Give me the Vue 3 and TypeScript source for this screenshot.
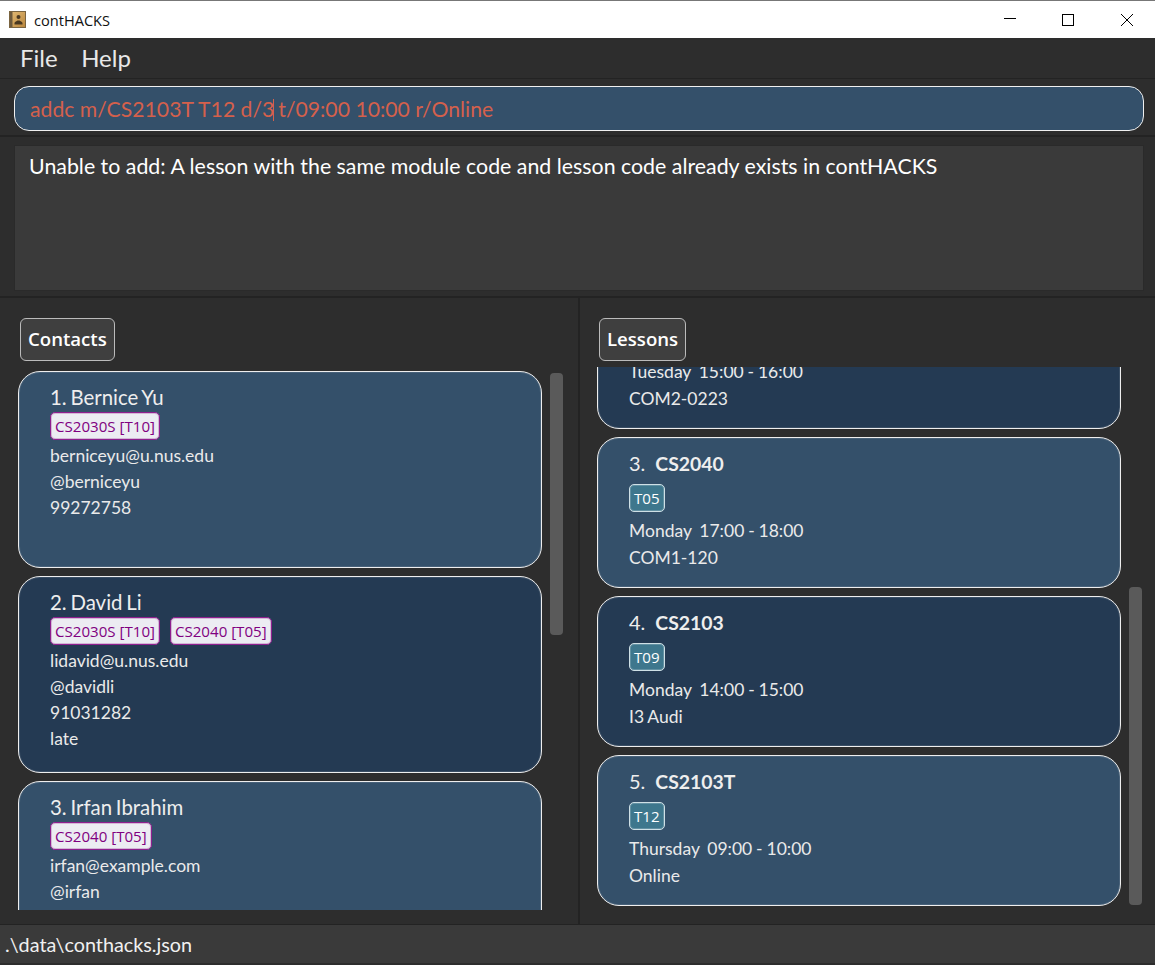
<script setup lang="ts">
interface Contact { name: string; tags: string[]; lines: string[] }
interface Lesson { num?: string; code?: string; tag?: string; time: string; room: string }
const contacts: Contact[] = [
  { name: '1. Bernice Yu', tags: ['CS2030S [T10]'], lines: ['berniceyu@u.nus.edu', '@berniceyu', '99272758'] },
  { name: '2. David Li', tags: ['CS2030S [T10]', 'CS2040 [T05]'], lines: ['lidavid@u.nus.edu', '@davidli', '91031282', 'late'] },
  { name: '3. Irfan Ibrahim', tags: ['CS2040 [T05]'], lines: ['irfan@example.com', '@irfan'] },
]
const lessons: Lesson[] = [
  { time: 'Tuesday  15:00 - 16:00', room: 'COM2-0223' },
  { num: '3.', code: 'CS2040', tag: 'T05', time: 'Monday  17:00 - 18:00', room: 'COM1-120' },
  { num: '4.', code: 'CS2103', tag: 'T09', time: 'Monday  14:00 - 15:00', room: 'I3 Audi' },
  { num: '5.', code: 'CS2103T', tag: 'T12', time: 'Thursday  09:00 - 10:00', room: 'Online' },
]
</script>

<template>
  <div class="window">
    <header class="titlebar">
      <svg class="appicon" width="17" height="17" viewBox="0 0 17 17">
        <defs>
          <linearGradient id="bookFill" x1="0" y1="0" x2="1" y2="1">
            <stop offset="0" stop-color="#e4bc76" />
            <stop offset="1" stop-color="#b9853c" />
          </linearGradient>
        </defs>
        <rect x="0.5" y="0.5" width="16" height="16" fill="url(#bookFill)" stroke="#7a6440" />
        <rect x="1" y="1" width="2.5" height="15" fill="#6e5a3c" />
        <circle cx="9.5" cy="6" r="2" fill="#4a3820" />
        <path d="M5.5 13.5V12c0-1.5 2.5-1.7 3-2.6h2c.5.9 3 1.1 3 2.6v1.5z" fill="#4a3820" />
      </svg>
      <span class="apptitle">contHACKS</span>
      <div class="controls">
        <svg width="14" height="14" viewBox="0 0 14 14"><path d="M2 5.5h12" stroke="#000" stroke-width="1" fill="none" /></svg>
        <svg width="14" height="14" viewBox="0 0 14 14"><rect x="1.5" y="1.5" width="11" height="11" stroke="#000" stroke-width="1" fill="none" /></svg>
        <svg width="14" height="14" viewBox="0 0 14 14"><path d="M1 1l12 12M13 1L1 13" stroke="#000" stroke-width="1" fill="none" /></svg>
      </div>
    </header>

    <nav class="menubar"><span>File</span><span>Help</span></nav>

    <section class="command">
      <div class="cmdbox">addc m/CS2103T T12 d/3<i class="caret"></i>t/09:00 10:00 r/Online</div>
    </section>

    <section class="result">
      <div class="resultbox">Unable to add: A lesson with the same module code and lesson code already exists in contHACKS</div>
    </section>

    <main class="panels">
      <section class="panel left">
        <button class="label">Contacts</button>
        <div class="list contacts">
          <article v-for="(c, i) in contacts" :key="c.name" class="card contact" :class="{ alt: i % 2 === 1 }">
            <div class="name">{{ c.name }}</div>
            <div class="tags">
              <span v-for="t in c.tags" :key="t" class="tag">{{ t }}</span>
            </div>
            <div v-for="l in c.lines" :key="l" class="line">{{ l }}</div>
          </article>
          <div class="scroll sc-left"></div>
        </div>
      </section>
      <section class="panel right">
        <button class="label">Lessons</button>
        <div class="list lessons">
          <div class="shift">
            <article v-for="(l, i) in lessons" :key="l.room" class="card lesson" :class="{ alt: i % 2 === 0, partial: !l.code }">
              <template v-if="l.code">
                <div class="lname">{{ l.num }}<b>{{ l.code }}</b></div>
                <div class="ltags"><span class="ltag">{{ l.tag }}</span></div>
              </template>
              <div class="lline ltime">{{ l.time }}</div>
              <div class="lline">{{ l.room }}</div>
            </article>
          </div>
          <div class="scroll sc-right"></div>
        </div>
      </section>
    </main>

    <footer class="status">.\data\conthacks.json</footer>
  </div>
</template>

<style>
html, body { margin: 0; background: #d8d8d8; }
</style>

<style scoped>
.window { width: 1155px; height: 965px; display: flex; flex-direction: column; font-family: Lato, "Open Sans", sans-serif; color: #fff; overflow: hidden; background: #2d2d2d; }
.titlebar { height: 37px; border-top: 1px solid #777; background: #fff; display: flex; align-items: center; padding-left: 9px; color: #111; flex: none; }
.appicon { margin-right: 8px; }
.apptitle { font-family: "Open Sans", sans-serif; font-size: 14.6px; }
.controls { margin-left: auto; display: flex; gap: 45px; padding-right: 21px; align-items: center; }
.menubar { height: 41px; box-sizing: border-box; padding: 0 0 1px 20px; background: #2d2d2d; display: flex; align-items: center; gap: 23.5px; font-size: 24px; color: #e8e8e8; flex: none; border-bottom: 1px solid #232323; }
.command { height: 58px; box-sizing: border-box; padding: 7px 11px 6px 14px; flex: none; border-bottom: 2px solid #232323; }
.cmdbox { height: 45px; box-sizing: border-box; border: 1px solid #f0f0f0; border-radius: 15px; background: #34506a; color: #d4604c; font-size: 21.2px; line-height: 45px; padding-left: 15px; white-space: pre; }
.caret { display: inline-block; width: 1px; height: 22px; background: #d4604c; vertical-align: -4px; margin: 0 4px 0 -1px; }
.result { height: 161px; box-sizing: border-box; padding: 8px 11px 5px 14px; flex: none; border-bottom: 2px solid #232323; }
.resultbox { height: 100%; box-sizing: border-box; background: #3a3a3a; border: 1px solid #2a2a2a; padding: 7px 14px; font-size: 21.35px; line-height: 26px; color: #fff; }
.panels { flex: 1; display: flex; min-height: 0; }
.panel { display: flex; flex-direction: column; min-width: 0; }
.left { padding: 20px 0 0 18px; box-sizing: border-box; border-right: 2px solid #232323; flex: none; width: 580px; }
.right { flex: 1; padding: 20px 0 0 17px; }
.label { align-self: flex-start; height: 43px; box-sizing: border-box; margin-left: 2px; border: 1px solid #bbb; border-radius: 6px; background: #3f3f3f; color: #fff; font-family: "Open Sans", sans-serif; font-size: 18.6px; font-weight: 600; padding: 0 7px 2px; }
.list { position: relative; overflow: hidden; flex: none; }
.contacts { margin-top: 10px; height: 539px; }
.card { box-sizing: border-box; border: 1px solid #eee; border-radius: 22px; background: #34506a; box-shadow: inset 0 0 0 1px rgba(255, 255, 255, 0.1); }
.card.alt { background: #243a53; }
.contact { height: 197px; margin-bottom: 8px; padding: 12px 31px; width: 524px; }
.name { font-size: 20.4px; word-spacing: -1.4px; line-height: 26px; color: #eee; }
.tags { display: flex; gap: 10px; height: 33px; padding-top: 2px; box-sizing: border-box; }
.tag { height: 28px; box-sizing: border-box; border: 1px solid #8e1f8e; border-radius: 5px; background: #ececf2; color: #800080; font-family: "Open Sans", sans-serif; font-size: 15.1px; line-height: 26px; padding: 0 4px; box-shadow: inset 0 0 0 1px rgba(150, 60, 150, 0.3); }
.line { font-size: 17.5px; line-height: 26px; color: #eaeaea; white-space: pre; }
.lessons { margin-top: 6px; height: 543px; }
.shift { margin-top: -89px; width: 524px; }
.lesson { height: 151px; margin-bottom: 8px; padding: 12px 31px; }
.partial { display: flex; flex-direction: column; justify-content: flex-end; padding-bottom: 16px; }
.lname { font-size: 20px; line-height: 26px; color: #eee; }
.lname b { margin-left: 10px; font-size: 19.4px; font-weight: 700; }
.ltags { height: 40px; padding-top: 7px; box-sizing: border-box; display: flex; align-items: flex-start; }
.ltag { height: 28px; box-sizing: border-box; border: 1px solid #cfe0e6; border-radius: 5px; background: #3e778d; color: #fff; font-family: "Open Sans", sans-serif; font-size: 15.1px; line-height: 26px; padding: 0 4px; box-shadow: inset 0 0 0 1px rgba(207, 224, 230, 0.25); }
.lline { font-size: 17.5px; line-height: 27px; color: #eaeaea; white-space: pre; word-spacing: -0.6px; }
.scroll { position: absolute; width: 13px; border-radius: 4px; background: #5a5a5a; }
.sc-left { top: 2px; left: 532px; height: 262px; }
.sc-right { top: 220px; left: 532px; height: 318px; }
.status { height: 39px; flex: none; box-sizing: border-box; background: #3a3a3a; border-top: 1px solid #232323; padding-left: 5px; font-size: 19.8px; line-height: 39px; color: #f0f0f0; margin-bottom: 2px; }
</style>
